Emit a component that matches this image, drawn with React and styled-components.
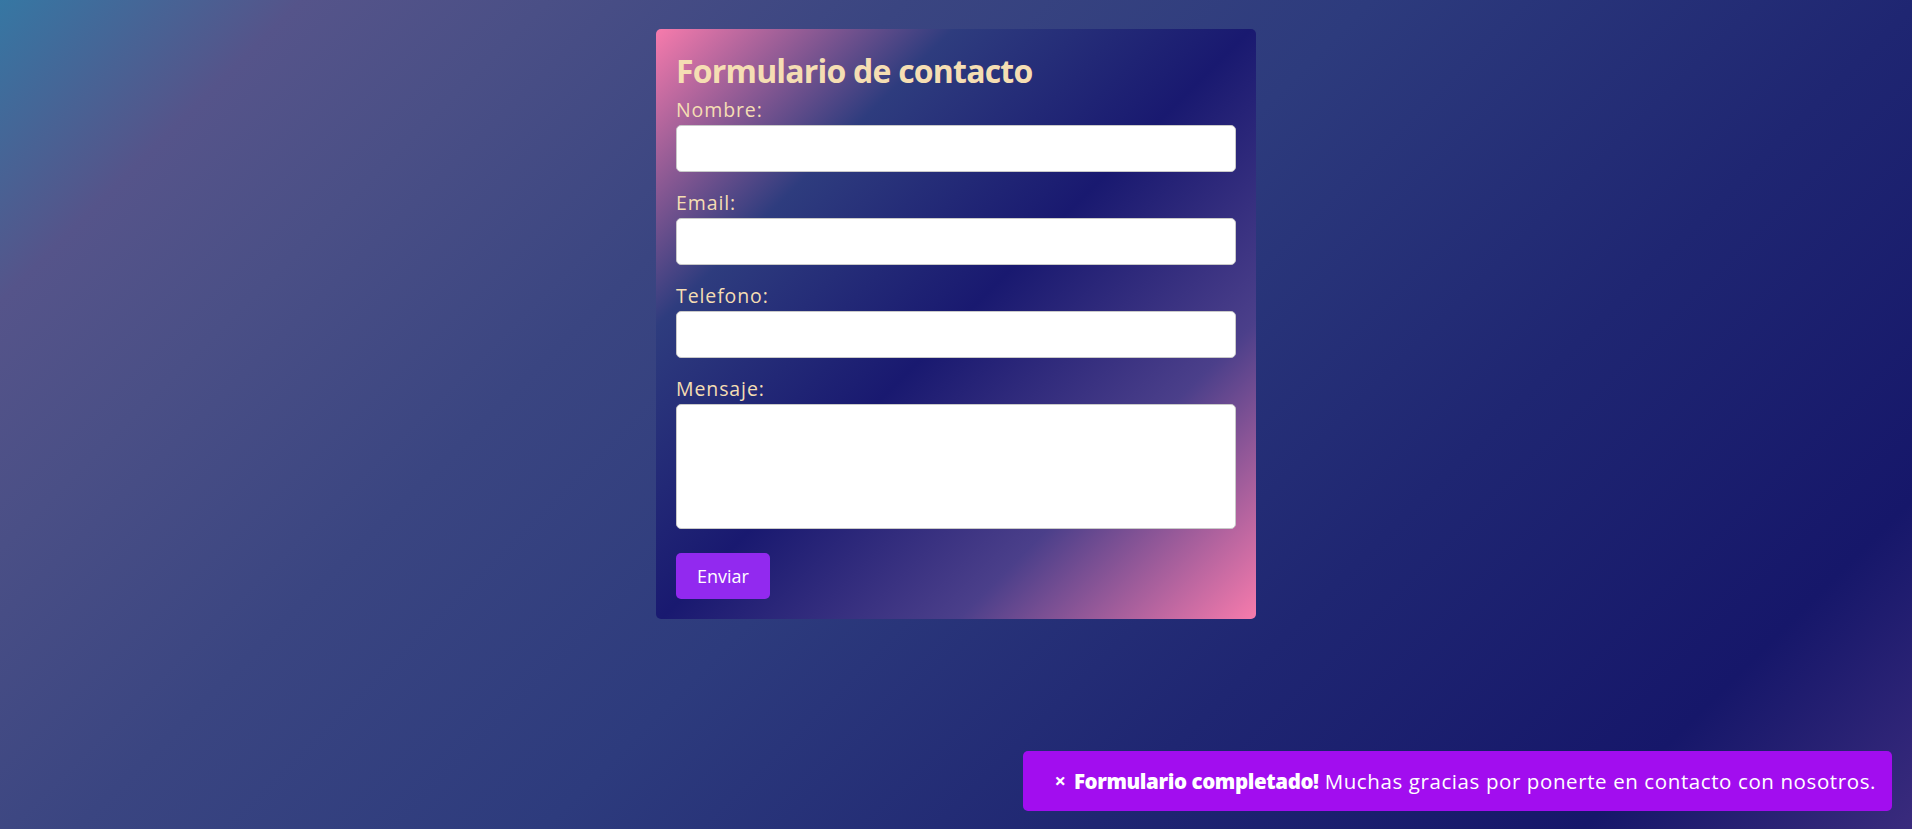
import React from "react";
import styled, { createGlobalStyle } from "styled-components";

const GlobalStyle = createGlobalStyle`
  * { box-sizing: border-box; }
  html, body { margin: 0; padding: 0; }
  body {
    font-family: "Open Sans", "Noto Sans", sans-serif;
    min-height: 100vh;
    background: linear-gradient(135deg, #3677a3 0%, #55548a 11%, #4a4f86 20%, #3a4581 33%, #2d3b7d 50%, #1f2672 70%, #16176a 88%, #3a2b7d 100%);
    background-attachment: fixed;
  }
`;

const Page = styled.main`
  min-height: 100vh;
  display: flex;
  flex-direction: column;
  align-items: center;
  padding-top: 29px;
`;

const Card = styled.form`
  width: 600px;
  padding: 20px;
  border-radius: 5px;
  background: linear-gradient(135deg, #f77bac 0%, #2e3c7e 25%, #191970 50%, #4b3f8a 75%, #f77bac 100%);
  display: flex;
  flex-direction: column;
`;

const Title = styled.h2`
  margin: 0 0 3px;
  font-size: 32px;
  line-height: 44px;
  font-weight: 700;
  color: #f5deb3;
  letter-spacing: -0.8px;
`;

const Field = styled.div`
  display: flex;
  flex-direction: column;
  margin-bottom: 17px;
`;

const Label = styled.label`
  font-size: 19.5px;
  line-height: 28px;
  color: #f5deb3;
  margin-bottom: 1px;
  letter-spacing: 0.9px;
`;

const Input = styled.input`
  width: 100%;
  height: 47px;
  border: 1px solid #c9c9c9;
  border-radius: 5px;
  background: #ffffff;
  padding: 10px;
  font: inherit;
  font-size: 16px;
`;

const TextArea = styled.textarea`
  width: 100%;
  height: 125px;
  border: 1px solid #c9c9c9;
  border-radius: 5px;
  background: #ffffff;
  padding: 10px;
  font: inherit;
  font-size: 16px;
  resize: none;
`;

const Button = styled.button`
  align-self: flex-start;
  margin-top: 7px;
  height: 46px;
  padding: 0 21px;
  border: none;
  border-radius: 5px;
  background: #9229ef;
  color: #ffffff;
  font-family: inherit;
  font-size: 18px;
  line-height: 46px;
  cursor: pointer;
`;

const Toast = styled.div`
  position: fixed;
  right: 20px;
  bottom: 18px;
  height: 60px;
  display: flex;
  align-items: center;
  padding: 0 16px 0 31px;
  background: #a20def;
  border-radius: 5px;
  color: #ffffff;
  font-size: 20.5px;
  white-space: nowrap;
`;

const Close = styled.span`
  font-size: 20px;
  font-weight: 700;
  margin-right: 8px;
  line-height: 1;
`;

const Strong = styled.strong`
  font-weight: 800;
  margin-right: 6px;
  letter-spacing: -0.4px;
`;

const Message = styled.span`
  letter-spacing: 0.6px;
`;

const fields = [
  { id: "nombre", label: "Nombre:", type: "text" },
  { id: "email", label: "Email:", type: "email" },
  { id: "telefono", label: "Telefono:", type: "tel" },
];

export default function App() {
  return (
    <>
      <GlobalStyle />
      <Page>
        <Card onSubmit={(e) => e.preventDefault()}>
          <Title>Formulario de contacto</Title>
          {fields.map((f) => (
            <Field key={f.id}>
              <Label htmlFor={f.id}>{f.label}</Label>
              <Input id={f.id} type={f.type} />
            </Field>
          ))}
          <Field>
            <Label htmlFor="mensaje">Mensaje:</Label>
            <TextArea id="mensaje" />
          </Field>
          <Button type="submit">Enviar</Button>
        </Card>
      </Page>
      <Toast>
        <Close>×</Close>
        <Strong>Formulario completado!</Strong>
        <Message>Muchas gracias por ponerte en contacto con nosotros.</Message>
      </Toast>
    </>
  );
}
